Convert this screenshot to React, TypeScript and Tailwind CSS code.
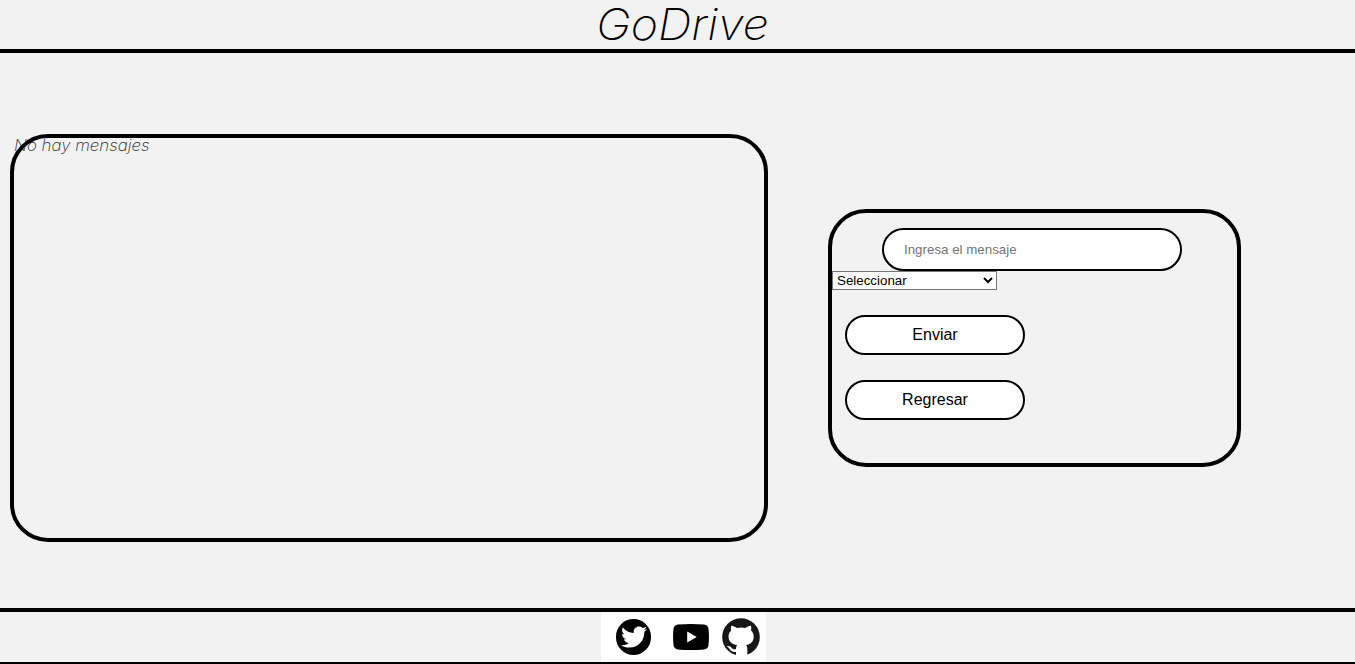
import { FaTwitter } from "react-icons/fa";

function SocialLinks() {
  return (
    <div className="flex h-[50px] w-[165px] items-center bg-white">
      <span className="ml-[15px] flex h-[36px] w-[35px] items-center justify-center rounded-full bg-black">
        <FaTwitter className="size-[26px] text-white" />
      </span>
      <svg viewBox="0 0 36 26" className="ml-[22px] h-[26px] w-[36px]">
        <path
          d="M5 .6Q18-.5 31 .6Q35 1 35.500 5Q36.400 13 35.500 21Q35 25 31 25.400Q18 26.500 5 25.400Q1 25 .5 21Q-.4 13 .5 5Q1 1 5 .6Z"
          fill="#000"
        />
        <path d="M14.200 7.600V18.400L23.700 13Z" fill="#fff" />
      </svg>
      <svg viewBox="0 0 38 38" className="ml-[13px] size-[38px]">
        <circle cx="19" cy="19" r="18.800" fill="#181616" />
        <path
          d="M9.300 7.800C11.300 7.800 13.300 9 15 10Q19 9.200 23.200 10C24.900 9 26.900 7.800 28.900 7.800C29.500 9.600 29.400 11.300 29 12.400C30.900 14.200 31.700 16 31.700 18.400C31.700 23.900 28.300 26.300 24 27C24.900 28 25.300 29.200 25.300 30.800V38H14V34C10.700 34.500 9.100 33.400 7.900 31.600C7.100 30.200 6.200 29 4.800 28.200C7 27.400 8.700 28.500 9.800 30C11 31.500 12.400 31.600 14 31C14 29.200 14.400 28 15.200 27C10.600 26.300 6.500 23.900 6.500 18.400C6.500 16 7.400 14.200 9.200 12.400C8.800 11.300 8.700 9.600 9.300 7.800Z"
          fill="#fff"
        />
      </svg>
    </div>
  );
}

export default function App() {
  return (
    <div className="flex h-[664px] w-full flex-col overflow-hidden bg-[#f2f2f2] font-['Liberation_Sans',Arial,sans-serif] text-black">
      <header className="flex h-[53px] shrink-0 justify-center border-b-4 border-black pl-[11px]">
        <h1 className="scale-x-[1.058] font-[Inter,sans-serif] text-[44px] leading-[49px] font-extralight whitespace-nowrap italic">
          GoDrive
        </h1>
      </header>

      <main className="flex h-[555px] shrink-0 items-start">
        <section className="mt-[81px] ml-[10px] h-[408px] w-[758px] rounded-[38px] border-4 border-black">
          <p className="origin-left scale-x-[1.055] font-[Inter,sans-serif] text-[16px] leading-[14px] font-extralight text-[#2a2a2a] italic [font-feature-settings:'cv11']">
            No hay mensajes
          </p>
        </section>

        <form className="mt-[156px] ml-[60px] flex h-[258px] w-[413px] flex-col items-start rounded-[38px] border-4 border-black">
          <input
            type="text"
            placeholder="Ingresa el mensaje"
            className="mt-[15px] ml-[50px] h-[43px] w-[300px] shrink-0 rounded-[25px] border-2 border-black bg-white px-5 text-[13.333px] placeholder:text-[#757575]"
          />
          <select className="h-[19px] w-[165px] shrink-0 border border-[#767676] bg-white text-[13.333px]">
            <option>Seleccionar</option>
          </select>
          <button type="button" className="mt-[25px] ml-[13px] h-10 w-[180px] shrink-0 rounded-[20px] border-2 border-black bg-white text-[16px]">
            Enviar
          </button>
          <button type="button" className="mt-[25px] ml-[13px] h-10 w-[180px] shrink-0 rounded-[20px] border-2 border-black bg-white text-[16px]">
            Regresar
          </button>
        </form>
      </main>

      <footer className="flex h-[56px] shrink-0 justify-center border-t-4 border-b-2 border-black pl-[12px]">
        <SocialLinks />
      </footer>
    </div>
  );
}
